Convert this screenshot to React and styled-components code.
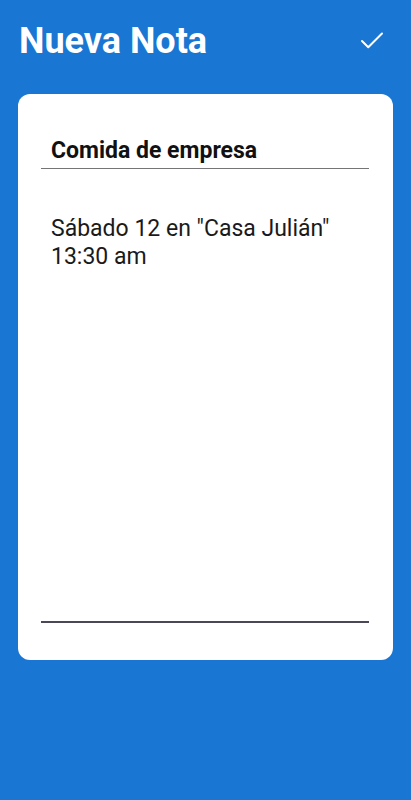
import styled, { createGlobalStyle } from "styled-components";
import { Check } from "lucide-react";

const GlobalStyle = createGlobalStyle`
  html, body {
    margin: 0;
    padding: 0;
    background: #1976d2;
  }
  * {
    box-sizing: border-box;
  }
`;

const Screen = styled.div`
  width: 411px;
  height: 800px;
  background: #1976d2;
  display: flex;
  flex-direction: column;
  font-family: Roboto, "Liberation Sans", sans-serif;
`;

const Header = styled.div`
  display: flex;
  align-items: center;
  justify-content: space-between;
  padding: 18px 24px 0 19px;
  height: 64px;
`;

const Title = styled.h1`
  margin: 0;
  color: white;
  font-size: 36px;
  font-weight: 700;
  line-height: 44px;
`;

const SaveButton = styled.button`
  background: none;
  border: none;
  padding: 0;
  color: white;
  display: flex;
  cursor: pointer;
`;

const Card = styled.div`
  margin: 30px 18px 0;
  height: 566px;
  background: white;
  border-radius: 12px;
  display: flex;
  flex-direction: column;
  padding: 0 24px 37px 23px;
`;

const TitleInput = styled.input`
  margin-top: 41px;
  height: 34px;
  border: none;
  border-bottom: 1px solid #757575;
  padding: 0 10px 2px;
  font-family: inherit;
  font-size: 23px;
  font-weight: 700;
  color: #111;
  outline: none;
  background: transparent;
`;

const Body = styled.textarea`
  flex: 1;
  padding: 46px 10px 0;
  border: none;
  border-bottom: 2px solid #4a4856;
  resize: none;
  font-family: inherit;
  font-size: 23px;
  line-height: 28px;
  color: #1a1a1a;
  outline: none;
  background: transparent;
`;

export default function App() {
  return (
    <Screen>
      <GlobalStyle />
      <Header>
        <Title>Nueva Nota</Title>
        <SaveButton>
          <Check size={30} strokeWidth={1.6} />
        </SaveButton>
      </Header>
      <Card>
        <TitleInput defaultValue="Comida de empresa" />
        <Body defaultValue={'Sábado 12 en "Casa Julián"\n13:30 am'} />
      </Card>
    </Screen>
  );
}
